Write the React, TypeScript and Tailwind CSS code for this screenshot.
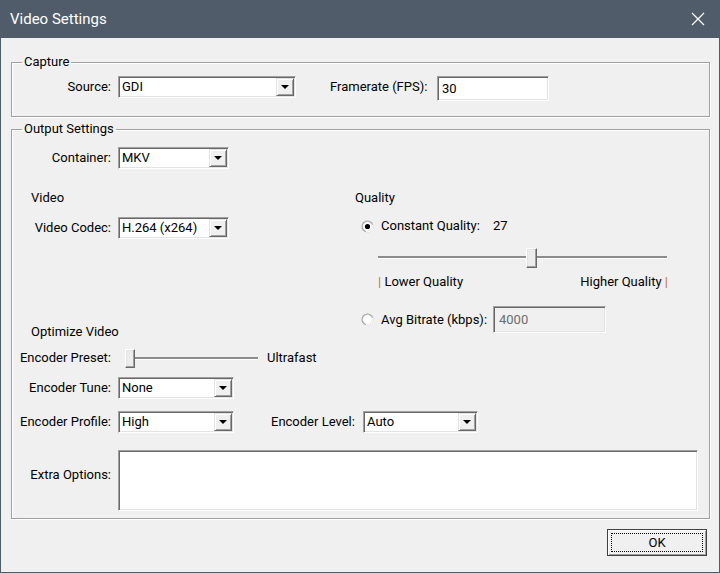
import React from "react";

const sunken =
  "border border-t-[#a0a0a0] border-l-[#a0a0a0] border-r-white border-b-white shadow-[inset_1px_1px_0_#696969,inset_-1px_-1px_0_#e3e3e3]";

function Combo({ w, value }: { w: string; value: string }) {
  return (
    <div className={`flex h-[22px] bg-white ${sunken} ${w}`}>
      <div className="flex-1 pl-[3px] leading-[20px] text-black">{value}</div>
      <div className="my-px mr-px flex h-[18px] w-[18px] items-center justify-center border border-t-[#e3e3e3] border-l-[#e3e3e3] border-r-[#696969] border-b-[#696969] bg-[#f0f0f0] shadow-[inset_1px_1px_0_#fff,inset_-1px_-1px_0_#a0a0a0]">
        <div className="h-0 w-0 border-l-[4px] border-r-[4px] border-t-[4px] border-l-transparent border-r-transparent border-t-black" />
      </div>
    </div>
  );
}

function Radio({ checked }: { checked?: boolean }) {
  return (
    <svg width="13" height="13" viewBox="0 0 13 13" className="shrink-0">
      <circle cx="6.5" cy="6.5" r="6" fill="#a0a0a0" />
      <path d="M12.2 4.6 A6 6 0 0 1 4.6 12.2 L6.5 6.5 Z" fill="#fff" />
      <circle cx="6.5" cy="6.5" r="5" fill="#e3e3e3" />
      <circle cx="6.5" cy="6.5" r="4.2" fill="#fff" />
      {checked && <circle cx="6.5" cy="6.5" r="2.6" fill="#000" />}
    </svg>
  );
}

function Thumb({ cls }: { cls: string }) {
  return (
    <div
      className={`absolute border border-t-white border-l-white border-r-[#696969] border-b-[#696969] bg-[#ececec] shadow-[inset_-1px_-1px_0_#a0a0a0,inset_1px_1px_0_#e3e3e3] ${cls}`}
    />
  );
}

export default function App() {
  return (
    <div
      className="flex h-[573px] w-[720px] flex-col bg-[#515c6b] text-[13px] text-black"
      style={{ fontFamily: "Roboto, 'Liberation Sans', sans-serif" }}
    >
      {/* Title bar */}
      <div className="flex h-[38px] shrink-0 items-center justify-between pl-[10px] pr-[15px] text-[15px] text-white">
        <span>Video Settings</span>
        <svg width="14" height="14" viewBox="0 0 14 14">
          <path d="M1 1 L13 13 M13 1 L1 13" stroke="#fff" strokeWidth="1.2" />
        </svg>
      </div>

      {/* Body */}
      <div className="mx-px mb-px flex flex-1 flex-col bg-[#f0f0f0]">
        {/* Capture */}
        <fieldset className="ml-[10px] mt-[16px] w-[699px] border border-[#a0a0a0] pb-[15px] shadow-[inset_1px_1px_0_#fff,1px_1px_0_#fff]">
          <legend className="ml-[10px] px-[2px] leading-[16px]">Capture</legend>
          <div className="mt-[6px] flex items-start">
            <div className="h-[22px] w-[99px] text-right leading-[22px]">Source:</div>
            <div className="ml-[7px]">
              <Combo w="w-[178px]" value="GDI" />
            </div>
            <div className="ml-[34px] h-[22px] w-[101px] leading-[22px]">Framerate (FPS):</div>
            <div className={`ml-[6px] h-[25px] w-[112px] bg-white pl-[4px] leading-[23px] ${sunken}`}>30</div>
          </div>
        </fieldset>

        {/* Output Settings */}
        <fieldset className="ml-[10px] mt-[4px] w-[699px] border border-[#a0a0a0] pb-[7px] shadow-[inset_1px_1px_0_#fff,1px_1px_0_#fff]">
          <legend className="ml-[10px] px-[2px] leading-[16px]">Output Settings</legend>

          <div className="mt-[10px] flex items-start">
            <div className="h-[22px] w-[99px] text-right leading-[22px]">Container:</div>
            <div className="ml-[7px]">
              <Combo w="w-[111px]" value="MKV" />
            </div>
          </div>

          <div className="mt-[21px] flex items-start">
            {/* left column */}
            <div className="flex w-[343px] flex-col">
              <div className="ml-[19px] h-[16px] leading-[16px]">Video</div>
              <div className="mt-[11px] flex items-start">
                <div className="h-[22px] w-[99px] text-right leading-[22px]">Video Codec:</div>
                <div className="ml-[7px]">
                  <Combo w="w-[111px]" value="H.264 (x264)" />
                </div>
              </div>
              <div className="ml-[19px] mt-[85px] h-[16px] leading-[16px]">Optimize Video</div>
              <div className="mt-[6px] flex h-[24px] items-center">
                <div className="w-[99px] text-right">Encoder Preset:</div>
                <div className="relative ml-[14px] h-[24px] w-[133px]">
                  <div className="absolute left-0 right-0 top-[11px] h-[3px] border-b border-b-white bg-[#8c8c8c]" />
                  <Thumb cls="left-0 top-[3px] h-[19px] w-[10px]" />
                </div>
                <div className="ml-[9px]">Ultrafast</div>
              </div>
              <div className="mt-[7px] flex items-start">
                <div className="h-[22px] w-[99px] text-right leading-[22px]">Encoder Tune:</div>
                <div className="ml-[7px]">
                  <Combo w="w-[116px]" value="None" />
                </div>
              </div>
            </div>

            {/* right column */}
            <div className="flex flex-col">
              <div className="h-[16px] leading-[16px]">Quality</div>
              <div className="mt-[12px] flex h-[16px] items-center">
                <div className="ml-[6px]">
                  <Radio checked />
                </div>
                <div className="ml-[7px] w-[112px]">Constant Quality:</div>
                <div>27</div>
              </div>
              <div className="relative ml-[23px] mt-[12px] h-[24px] w-[289px]">
                <div className="absolute left-0 right-0 top-[10px] h-[3px] border-b border-b-white bg-[#8c8c8c]" />
                <Thumb cls="left-[148px] top-[2px] h-[20px] w-[11px]" />
              </div>
              <div className="ml-[23px] mt-[4px] flex h-[16px] w-[290px] justify-between leading-[16px]">
                <span>
                  <span className="text-[#c8741c]">|</span> Lower Quality
                </span>
                <span>
                  Higher Quality <span className="text-[#c8741c]">|</span>
                </span>
              </div>
              <div className="mt-[16px] flex items-center">
                <div className="ml-[6px]">
                  <Radio />
                </div>
                <div className="ml-[7px] w-[112px]">Avg Bitrate (kbps):</div>
                <div className={`h-[27px] w-[113px] bg-[#f0f0f0] pl-[5px] leading-[25px] text-[#6d6d6d] ${sunken}`}>4000</div>
              </div>
            </div>
          </div>

          <div className="mt-[12px] flex items-start">
            <div className="h-[22px] w-[99px] text-right leading-[22px]">Encoder Profile:</div>
            <div className="ml-[7px]">
              <Combo w="w-[116px]" value="High" />
            </div>
            <div className="ml-[37px] h-[22px] w-[84px] leading-[22px]">Encoder Level:</div>
            <div className="ml-[8px]">
              <Combo w="w-[115px]" value="Auto" />
            </div>
          </div>

          <div className="mt-[17px] flex items-start">
            <div className="mt-[17px] h-[16px] w-[99px] text-right leading-[16px]">Extra Options:</div>
            <div className={`ml-[7px] h-[61px] w-[580px] bg-white ${sunken}`} />
          </div>
        </fieldset>

        <div className="mr-[12px] mt-[10px] flex justify-end">
          <div className="relative flex h-[27px] w-[100px] items-center justify-center border border-[#404040] bg-[#f0f0f0] shadow-[inset_1px_1px_0_#fff,inset_-1px_-1px_0_#a0a0a0]">
            <div className="absolute inset-[3px] border border-dotted border-black" />
            <span>OK</span>
          </div>
        </div>
      </div>
    </div>
  );
}
